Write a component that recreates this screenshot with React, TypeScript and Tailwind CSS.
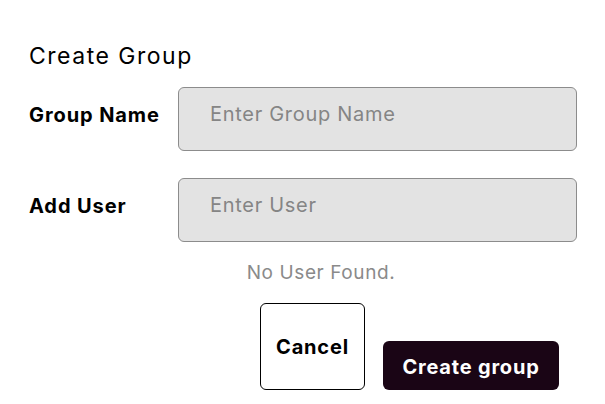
import React, { useState } from "react";

const font = { fontFamily: "Inter, 'Open Sans', sans-serif" };

const App: React.FC = () => {
  const [groupName, setGroupName] = useState("");
  const [user, setUser] = useState("");

  return (
    <div
      className="w-[605px] h-[404px] bg-white pt-[38px] pl-[29px] pr-[28px] text-black"
      style={font}
    >
      <h2 className="text-[23px] leading-[36px] font-normal tracking-[1.5px] mb-[13px]">Create Group</h2>

      <div className="flex flex-col gap-[27px]">
        <div className="flex items-center">
          <label className="w-[149px] text-[20px] font-bold pb-2 tracking-[0.9px]">Group Name</label>
          <input
            value={groupName}
            onChange={(e) => setGroupName(e.target.value)}
            placeholder="Enter Group Name"
            className="flex-1 h-16 bg-[#e3e3e3] border border-[#8c8c8c] rounded-[6px] pl-[31px] text-[20px] tracking-[0.7px] outline-none placeholder:text-[#858585] pb-[10px]"
          />
        </div>
        <div className="flex items-center">
          <label className="w-[149px] text-[20px] font-bold pb-2 tracking-[0.9px]">Add User</label>
          <input
            value={user}
            onChange={(e) => setUser(e.target.value)}
            placeholder="Enter User"
            className="flex-1 h-16 bg-[#e3e3e3] border border-[#8c8c8c] rounded-[6px] pl-[31px] text-[20px] tracking-[0.7px] outline-none placeholder:text-[#858585] pb-[10px]"
          />
        </div>
      </div>

      <p className="mt-[17px] text-[19px] leading-[28px] tracking-[0.6px] text-[#8a8a8a] text-center pl-[36px]">
        No User Found.
      </p>

      <div className="flex justify-end items-end gap-[18px] pr-[18px] mt-[16px]">
        <button className="w-[105px] h-[87px] bg-white border border-black rounded-[6px] text-[20px] font-bold tracking-[0.8px]">
          Cancel
        </button>
        <button className="w-[176px] h-[49px] bg-[#1a0515] text-white rounded-[6px] text-[20px] font-bold tracking-[0.8px] pt-[3px]">
          Create group
        </button>
      </div>
    </div>
  );
};

export default App;
